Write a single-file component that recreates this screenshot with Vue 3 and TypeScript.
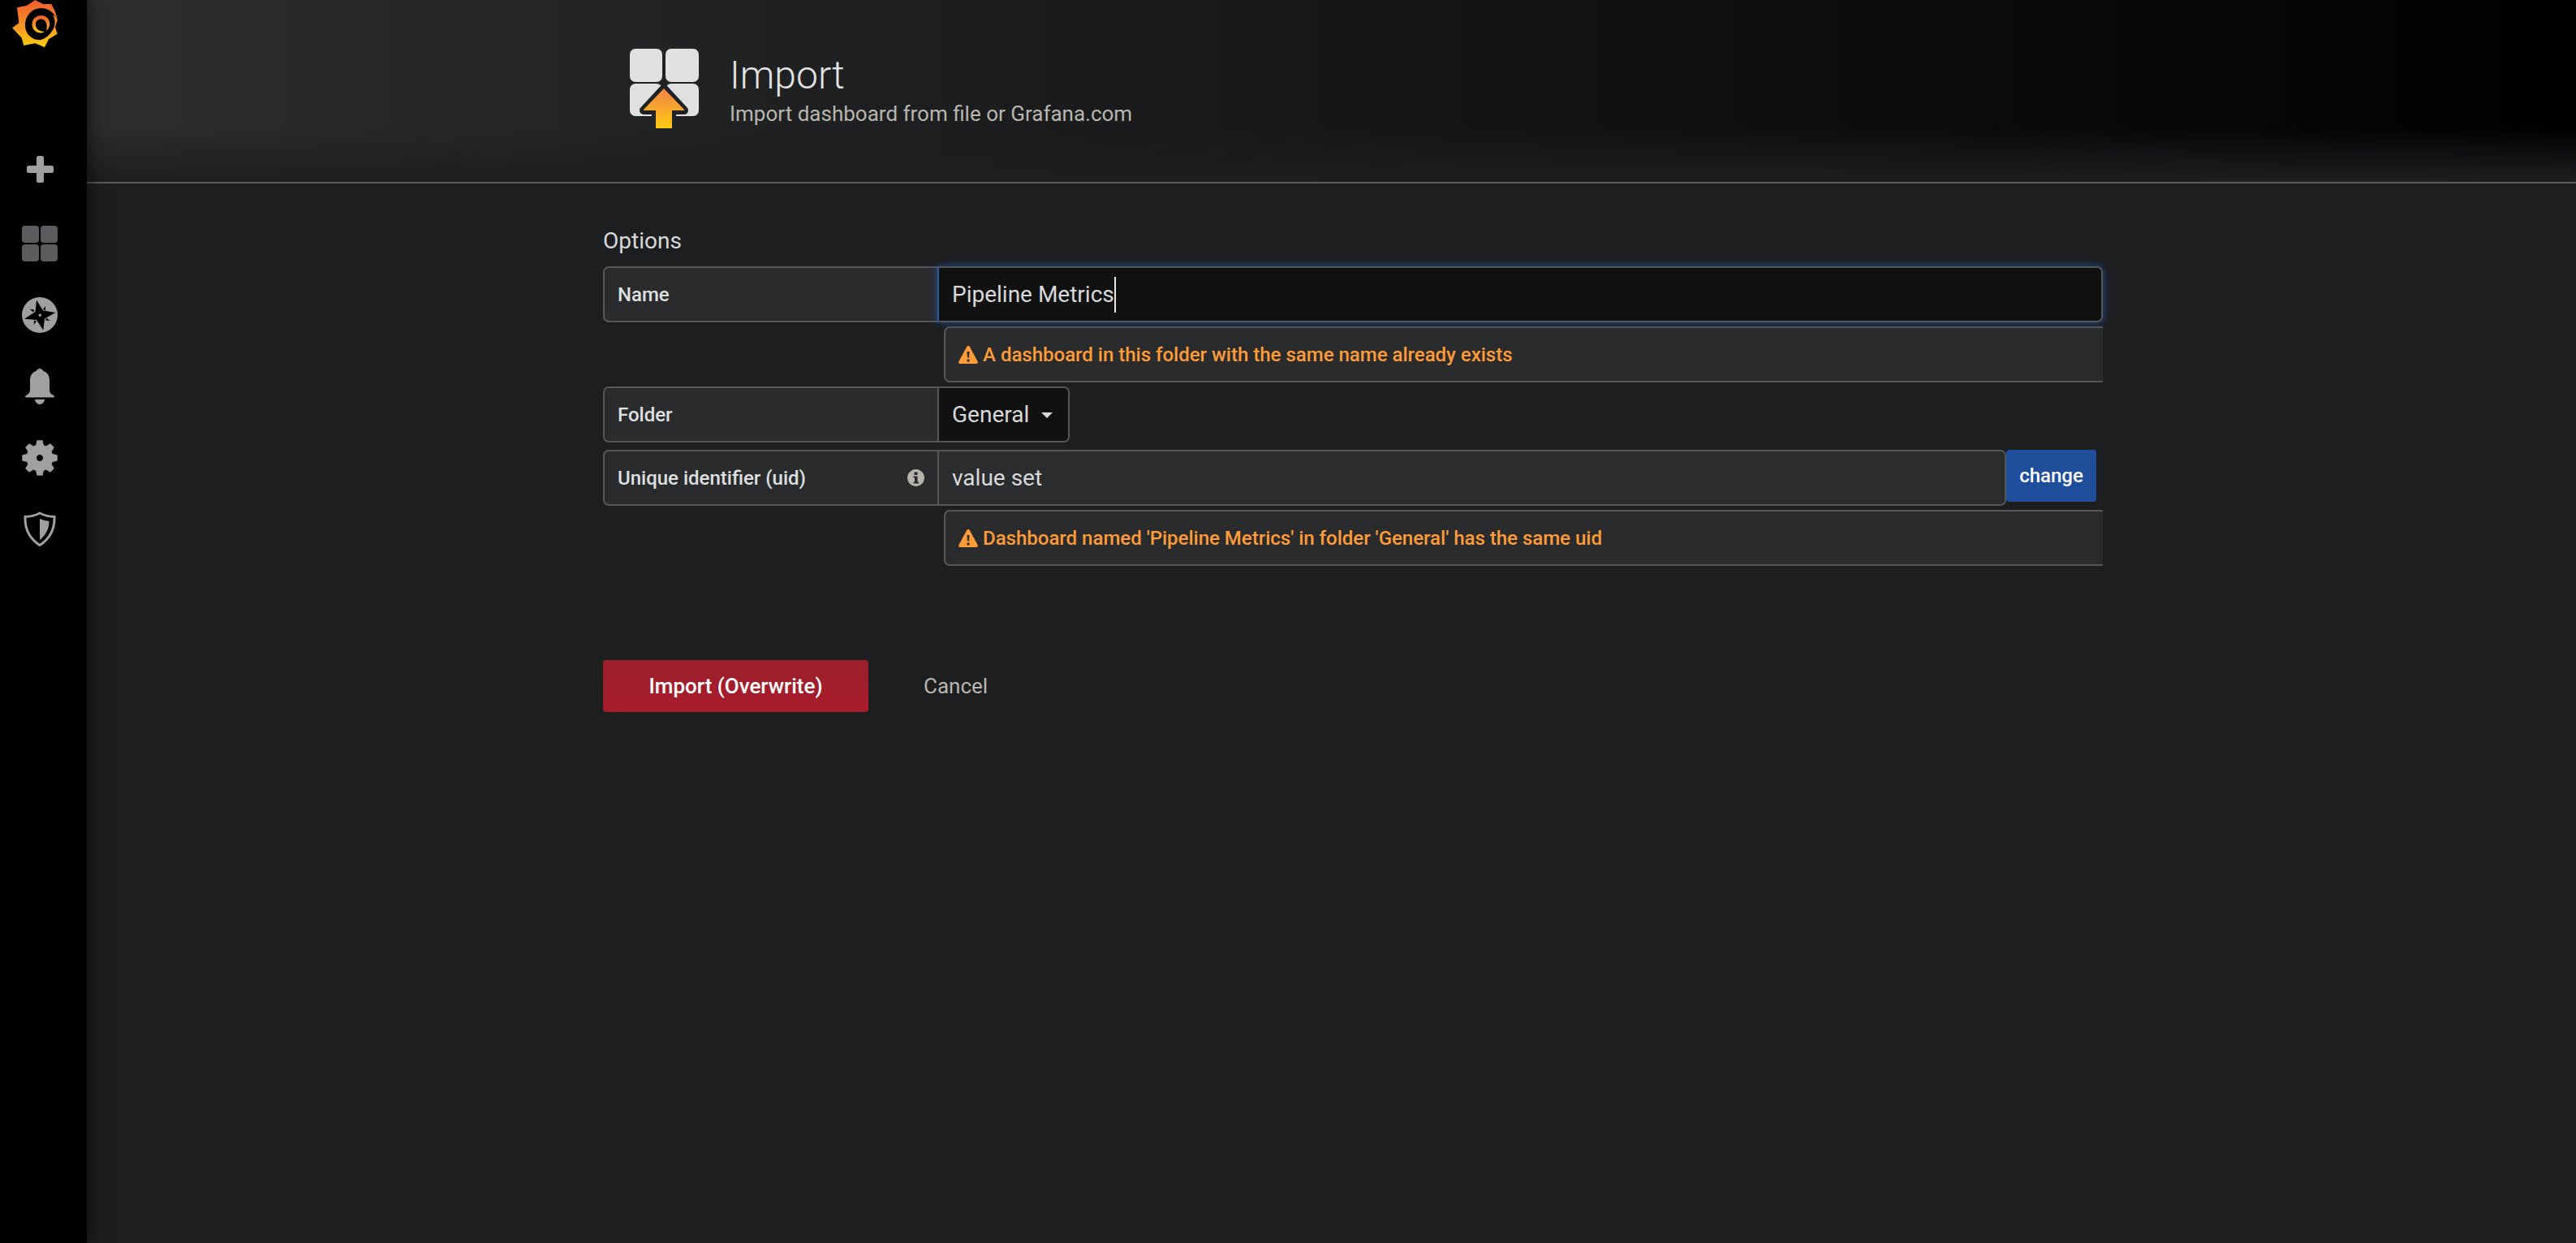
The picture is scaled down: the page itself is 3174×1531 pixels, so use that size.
<script setup lang="ts">
const gearPath = (): string =>
{
    const points: string[] = [];
    const teeth = 8;
    for (let i = 0; i < teeth; i++)
    {
        const mid = (i / teeth) * Math.PI * 2 - Math.PI / 2;
        const corners: [number, number][] = [[16.5, -0.3], [22, -0.16], [22, 0.16], [16.5, 0.3]];
        for (const [r, a] of corners)
        {
            const x = 22 + r * Math.cos(mid + a);
            const y = 22 + r * Math.sin(mid + a);
            points.push(`${x.toFixed(2)} ${y.toFixed(2)}`);
        }
    }
    return "M" + points.join("L") + "Z";
};

const gear = gearPath();
</script>

<template>
    <div class="page">
        <nav class="sidemenu">
            <div class="logo-slot">
                <svg class="logo" width="57" height="59" viewBox="0 0 57 59">
                    <defs>
                        <linearGradient id="logo-fill" x1="0" y1="0" x2="0" y2="1">
                            <stop offset="0" stop-color="#f15b2a" />
                            <stop offset="0.5" stop-color="#f68f28" />
                            <stop offset="1" stop-color="#fccc0c" />
                        </linearGradient>
                    </defs>
                    <path fill="url(#logo-fill)" d="M28.300 0 L38.300 5 L48.300 5 C52 12 55 18 55.700 25 L53 33.300 L55.700 41.700 L45 48.300 L40 58.300 L28.300 53.300 L14.300 56 L11.700 46.700 L0 34.300 L8.300 28.300 L6 9.300 L18.300 6.700 Z" />
                    <path fill="#000" d="M34 10 C44 9.500 52 15 55.700 25 C54 21 52 19 50 18 C53 24 54 30 50 37 C45 45 38 50 31 49 C22 48 15 39 16 29 C17 18 25 11 34 10 Z" />
                    <path fill="url(#logo-fill)" d="M40 39 C36 42 26 41 24.500 31 C24 23 30 19 36 19 C43 19 47 25 46 31 C45.500 34 44 36 42 38 C44 31 42 24 36 23.500 C32 23 28.500 26 29 31 C29.500 36 33 38.500 40 39 Z" />
                </svg>
            </div>
            <div class="menu-item first">
                <svg width="33" height="33" viewBox="0 0 33 33"><path class="icon" d="M12 2.500 a2.500 2.500 0 0 1 2.500 -2.500 h4 a2.500 2.500 0 0 1 2.500 2.500 V12 H30.500 a2.500 2.500 0 0 1 2.500 2.500 v4 a2.500 2.500 0 0 1 -2.500 2.500 H21 V30.500 a2.500 2.500 0 0 1 -2.500 2.500 h-4 a2.500 2.500 0 0 1 -2.500 -2.500 V21 H2.500 a2.500 2.500 0 0 1 -2.500 -2.500 v-4 a2.500 2.500 0 0 1 2.500 -2.500 H12 Z" /></svg>
            </div>
            <div class="menu-item">
                <svg width="44" height="44" viewBox="0 0 44 44">
                    <rect class="icon-dim" x="0" y="0" width="21" height="21" rx="4" />
                    <rect class="icon-dim" x="23" y="0" width="21" height="21" rx="4" />
                    <rect class="icon-dim" x="0" y="23" width="21" height="21" rx="4" />
                    <rect class="icon-dim" x="23" y="23" width="21" height="21" rx="4" />
                </svg>
            </div>
            <div class="menu-item">
                <svg width="44" height="44" viewBox="0 0 44 44">
                    <circle class="icon" cx="22" cy="22" r="22" />
                    <path fill="#000" d="M18 3.500 L26 16.500 L41.300 19 L28 26.500 L26.300 40.700 L18 28 L3 26.700 L16.500 18 Z" />
                    <path fill="#000" d="M9.700 14.700 L15.500 15.500 L14 18.500 Z M29 11.300 L29 16.500 L26 15 Z M34.700 29 L29 28.500 L30 25.500 Z M14.700 34 L15 28.500 L18 29.500 Z" />
                    <circle class="icon" cx="22.300" cy="22.300" r="1.700" />
                </svg>
            </div>
            <div class="menu-item">
                <svg width="36" height="44" viewBox="0 0 36 44">
                    <path class="icon" d="M18 0 C20 0 21.500 1.500 22.500 3 C27 4.500 30 8.500 30 14 L30 26 C30 29 31 31 34 32.500 C36.500 33.500 36.500 35.500 34 35.500 L2 35.500 C-0.500 35.500 -0.500 33.500 2 32.500 C5 31 6 29 6 26 L6 14 C6 8.500 9 4.500 13.500 3 C14.500 1.500 16 0 18 0 Z" />
                    <path class="icon" d="M12 38 L24 38 C23.500 41.500 21 44 18 44 C15 44 12.500 41.500 12 38 Z" />
                </svg>
            </div>
            <div class="menu-item">
                <svg width="44" height="44" viewBox="0 0 44 44">
                    <path class="icon" fill-rule="evenodd" :d="gear + ' M22 18 a4 4 0 1 0 0.010 0 Z'" />
                </svg>
            </div>
            <div class="menu-item">
                <svg width="40" height="44" viewBox="0 0 40 44">
                    <path fill="none" stroke="#a0a0a0" stroke-width="3" d="M20 2 C26 5 32 6.500 38 6.500 C38.500 20 33 33 20 41.500 C7 33 1.500 20 2 6.500 C8 6.500 14 5 20 2 Z" />
                    <path class="icon" d="M20 9 C24 10.500 28 11.500 31.500 12 C31.500 21 27.500 29 20 35 Z" />
                </svg>
            </div>
        </nav>

        <main class="main">
            <header class="page-header">
                <svg class="header-icon" width="85" height="98" viewBox="0 0 85 98">
                    <defs>
                        <linearGradient id="arrow-fill" x1="0" y1="0" x2="0" y2="1">
                            <stop offset="0" stop-color="#f08348" />
                            <stop offset="1" stop-color="#ffcb12" />
                        </linearGradient>
                    </defs>
                    <rect x="0" y="0" width="40" height="41" rx="7" fill="#e0e0e0" />
                    <rect x="44" y="0" width="41" height="41" rx="7" fill="#e0e0e0" />
                    <rect x="0" y="43" width="40" height="40" rx="7" fill="#e0e0e0" />
                    <rect x="44" y="43" width="41" height="40" rx="7" fill="#e0e0e0" />
                    <path d="M42 49 L67 76 L52 76 L52 98 L32 98 L32 76 L17 76 Z" fill="#212225" stroke="#212225" stroke-width="10" stroke-linejoin="round" />
                    <path d="M42 49 L67 75 Q68 76 66 76 L52 76 L52 98 L32 98 L32 76 L18 76 Q16 76 17 75 Z" fill="url(#arrow-fill)" />
                </svg>
                <div class="header-text">
                    <h1 class="title">Import</h1>
                    <div class="subtitle">Import dashboard from file or Grafana.com</div>
                </div>
            </header>

            <section class="content">
                <h3 class="section-title">Options</h3>

                <div class="form-row">
                    <label class="form-label">Name</label>
                    <div class="form-input focused">
                        <span class="caret-text">Pipeline Metrics</span>
                    </div>
                </div>
                <div class="warning">
                    <svg class="warn-icon" width="24" height="22" viewBox="0 0 24 22">
                        <path fill-rule="evenodd" d="M12 0 C13 0 13.500 0.500 14 1.500 L23.500 19 C24.500 20.800 23.500 22 22 22 L2 22 C0.500 22 -0.500 20.800 0.500 19 L10 1.500 C10.500 0.500 11 0 12 0 Z M10.500 7 L11 14.500 L13 14.500 L13.500 7 Z M10.500 16.500 L10.500 19.500 L13.500 19.500 L13.500 16.500 Z" />
                    </svg>
                    A dashboard in this folder with the same name already exists
                </div>

                <div class="form-row">
                    <label class="form-label">Folder</label>
                    <div class="form-select">
                        General
                        <span class="select-caret"></span>
                    </div>
                </div>

                <div class="form-row uid-row">
                    <label class="form-label">
                        Unique identifier (uid)
                        <svg class="info-icon" width="21" height="21" viewBox="0 0 21 21">
                            <path fill-rule="evenodd" d="M10.500 0 a10.500 10.500 0 1 0 0.010 0 Z M8.500 3.500 h4 v3.500 h-4 Z M7.500 8.500 h5 v7 h1.500 v2 h-6.500 v-2 h1.500 v-5 h-1.500 Z" />
                        </svg>
                    </label>
                    <div class="form-input readonly">value set</div>
                    <button class="btn-change" type="button">change</button>
                </div>
                <div class="warning">
                    <svg class="warn-icon" width="24" height="22" viewBox="0 0 24 22">
                        <path fill-rule="evenodd" d="M12 0 C13 0 13.500 0.500 14 1.500 L23.500 19 C24.500 20.800 23.500 22 22 22 L2 22 C0.500 22 -0.500 20.800 0.500 19 L10 1.500 C10.500 0.500 11 0 12 0 Z M10.500 7 L11 14.500 L13 14.500 L13.500 7 Z M10.500 16.500 L10.500 19.500 L13.500 19.500 L13.500 16.500 Z" />
                    </svg>
                    Dashboard named 'Pipeline Metrics' in folder 'General' has the same uid
                </div>

                <div class="actions">
                    <button class="btn-import" type="button">Import (Overwrite)</button>
                    <a class="btn-cancel">Cancel</a>
                </div>
            </section>
        </main>
    </div>
</template>

<style scoped>
.page
{
    display: flex;
    height: 1531px;
    overflow: hidden;
    font-family: Roboto, "Liberation Sans", sans-serif;
    color: #d8d9da;
    background-color: #1d1e20;
}

.sidemenu
{
    display: flex;
    flex-direction: column;
    flex: 0 0 107px;
    background-color: #000;
    box-shadow: 0 0 24px rgba(0, 0, 0, 0.7);
    z-index: 1;
}

.logo-slot
{
    height: 164px;
    padding-left: 15px;
}

.logo
{
    display: block;
}

.menu-item
{
    display: flex;
    justify-content: center;
    align-items: center;
    height: 88px;
    padding-right: 9px;
}

.menu-item.first
{
    margin-bottom: 4px;
}

.icon
{
    fill: #a0a0a0;
}

.icon-dim
{
    fill: #5c5c5e;
}

.main
{
    flex: 1;
    min-width: 0;
}

.page-header
{
    display: flex;
    align-items: flex-start;
    height: 164px;
    padding: 60px 0 0 669px;
    border-bottom: 2px solid #5a5b5e;
    background: linear-gradient(180deg, rgba(29, 30, 32, 0) 70%, #1d1e20 100%), linear-gradient(90deg, #2c2d2f, #000);
}

.header-icon
{
    flex: none;
}

.header-text
{
    margin-left: 38px;
}

.title
{
    margin: 5px 0 0;
    font-size: 48px;
    font-weight: 300;
    line-height: 56px;
    color: #e3e3e3;
}

.subtitle
{
    margin-top: 3px;
    font-size: 26px;
    font-weight: 400;
    line-height: 32px;
    color: #b8b6ae;
}

.content
{
    width: 1848px;
    margin-left: 636px;
    padding-top: 53px;
}

.section-title
{
    margin: 0 0 13px;
    font-size: 28px;
    font-weight: 400;
    line-height: 36px;
    color: #d8d9da;
}

.form-row
{
    display: flex;
    height: 69px;
}

.uid-row
{
    margin-top: 9px;
}

.form-label
{
    display: flex;
    flex: none;
    align-items: center;
    justify-content: space-between;
    width: 414px;
    padding: 0 16px;
    box-sizing: border-box;
    background-color: #2a2b2d;
    border: 2px solid #555659;
    border-radius: 7px 0 0 7px;
    font-size: 24px;
    font-weight: 500;
    white-space: nowrap;
    color: #dfe0e1;
}

.form-input
{
    display: flex;
    align-items: center;
    flex: 1;
    padding: 0 16px;
    box-sizing: border-box;
    margin-left: -2px;
    border: 2px solid #555659;
    border-radius: 0 7px 7px 0;
    font-size: 28px;
    color: #d8d9da;
}

.form-input.focused
{
    background-color: #111;
    box-shadow: 0 0 10px rgba(36, 96, 190, 0.75);
    border-left-color: #2f5a94;
}

.form-input.readonly
{
    background-color: #2b2c2e;
    flex: none;
    width: 1317px;
}

.caret-text
{
    border-right: 2px solid #e6e6e6;
    line-height: 44px;
}

.form-select
{
    display: flex;
    align-items: center;
    margin-left: -2px;
    padding: 0 19px 0 16px;
    box-sizing: border-box;
    background-color: #111;
    border: 2px solid #555659;
    border-radius: 0 7px 7px 0;
    font-size: 28px;
}

.select-caret
{
    margin: 2px 0 0 15px;
    border-left: 7px solid transparent;
    border-right: 7px solid transparent;
    border-top: 7px solid #d8d9da;
}

.warning
{
    display: flex;
    align-items: center;
    height: 69px;
    margin: 5px 0 5px 420px;
    padding-left: 16px;
    box-sizing: border-box;
    background-color: #2a2b2d;
    border: 2px solid #555659;
    border-right: none;
    border-radius: 7px 0 0 7px;
    font-size: 24px;
    font-weight: 500;
    color: #ff9c38;
}

.warn-icon
{
    flex: none;
    margin-right: 6px;
    fill: #ff9c38;
}

.info-icon
{
    flex: none;
    margin-right: 0;
    fill: #b5b3ab;
}

.btn-change
{
    flex: none;
    align-self: flex-start;
    width: 111px;
    height: 64px;
    padding: 0;
    background-color: #1f4e9a;
    border: none;
    border-radius: 4px;
    font-family: inherit;
    font-size: 24px;
    font-weight: 500;
    color: #fff;
}

.actions
{
    display: flex;
    align-items: center;
    margin-top: 116px;
}

.btn-import
{
    width: 327px;
    height: 64px;
    padding: 0;
    background: linear-gradient(180deg, #9b1f2b, #a91c2c);
    border: none;
    border-radius: 4px;
    font-family: inherit;
    font-size: 26px;
    font-weight: 500;
    color: #fff;
}

.btn-cancel
{
    margin-left: 68px;
    font-size: 26px;
    color: #b8b6ae;
}
</style>

<style>
html, body
{
    margin: 0;
    background-color: #1d1e20;
}
</style>
